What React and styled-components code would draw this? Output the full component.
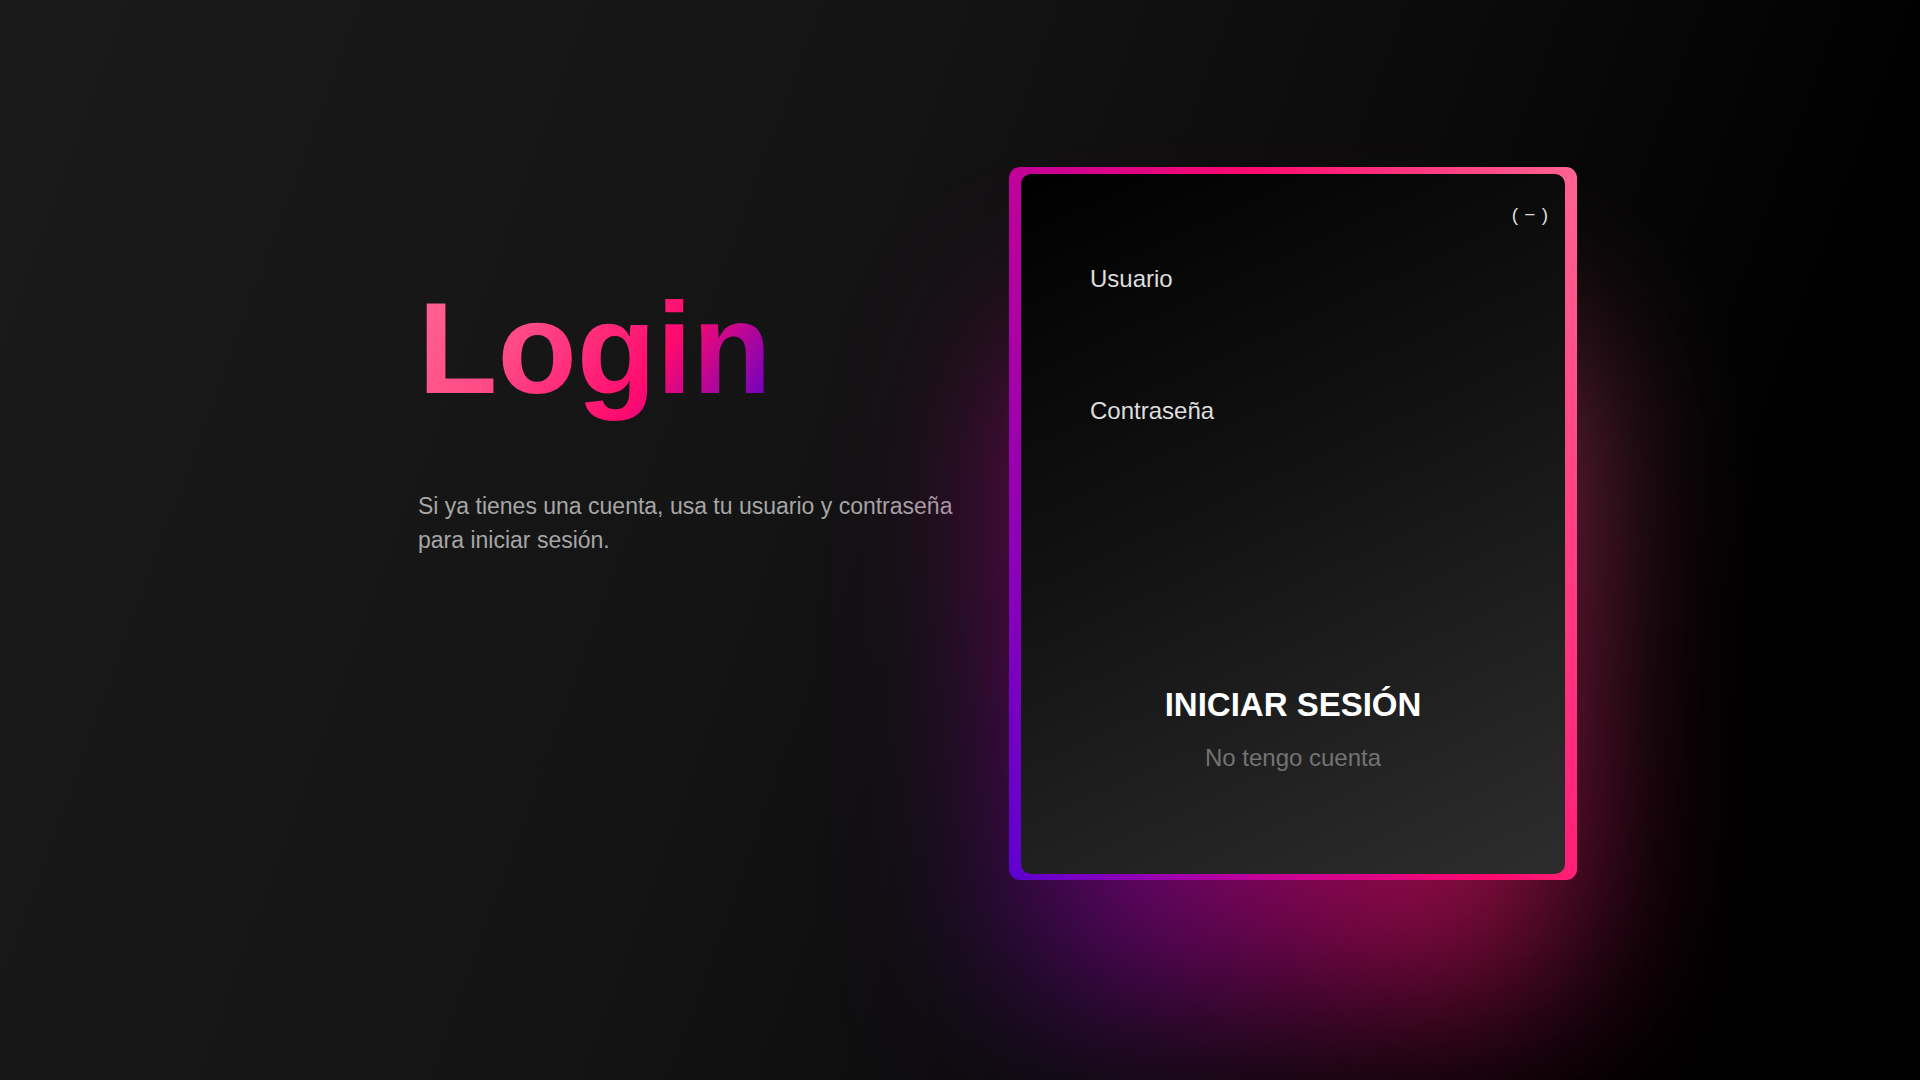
import styled, { createGlobalStyle } from 'styled-components';

const GlobalStyle = createGlobalStyle`
  html,
  body {
    margin: 0;
    padding: 0;
    min-height: 100%;
    background: linear-gradient(110deg, #1a1a1a 0%, #141414 40%, #0a0a0a 65%, #000 85%);
    font-family: 'Liberation Sans', Arial, sans-serif;
  }

  * {
    box-sizing: border-box;
  }
`;

const borderGradient = 'linear-gradient(71deg, #5c00d2 0%, #c0009a 30%, #ff0a6e 60%, #ff6492 100%)';

const Page = styled.div`
  display: flex;
  align-items: flex-start;
  min-height: 100vh;
  padding: 167px 0 0 418px;
`;

const Intro = styled.div`
  width: 591px;
  flex-shrink: 0;
`;

const Title = styled.h1`
  display: inline-block;
  margin: 103px 0 0;
  font-size: 130px;
  font-weight: 700;
  line-height: 1.2;
  background: linear-gradient(125deg, #ff6694 0%, #ff4a86 32%, #ff0a6e 66%, #5200d0 100%);
  -webkit-background-clip: text;
  background-clip: text;
  color: transparent;
`;

const Lead = styled.p`
  width: 560px;
  margin: 63px 0 0;
  font-size: 23px;
  line-height: 34px;
  color: #a6a6a6;
`;

const CardArea = styled.div`
  position: relative;
  width: 568px;
  height: 713px;
  flex-shrink: 0;
`;

const Glow = styled.div`
  position: absolute;
  left: 10px;
  right: 10px;
  top: 170px;
  bottom: -120px;
  border-radius: 60px;
  background: ${borderGradient};
  filter: blur(90px);
  opacity: 0.6;
`;

const Frame = styled.div`
  position: relative;
  height: 100%;
  padding: 7px 12px 6px;
  border-radius: 11px;
  background: ${borderGradient};
`;

const Card = styled.form`
  display: flex;
  flex-direction: column;
  height: 100%;
  padding: 30px 0 102px;
  border-radius: 10px;
  background: linear-gradient(155deg, #000 0%, #121212 45%, #2d2d2d 100%);
`;

const TopRow = styled.div`
  display: flex;
  justify-content: flex-end;
  padding-right: 17px;
`;

const Toggle = styled.button`
  padding: 0;
  border: none;
  background: none;
  font-family: inherit;
  font-size: 19px;
  line-height: 22px;
  word-spacing: 1px;
  color: #dcdcdc;
  cursor: pointer;
`;

const Fields = styled.div`
  display: flex;
  flex-direction: column;
  gap: 48px;
  margin-top: 39px;
  padding: 0 69px;
`;

const Field = styled.label`
  display: flex;
  flex-direction: column;
  gap: 8px;
  font-size: 24px;
  line-height: 28px;
  color: #dedede;
`;

const Input = styled.input`
  height: 48px;
  padding: 0;
  border: none;
  outline: none;
  background: transparent;
  font-family: inherit;
  font-size: 20px;
  color: #fff;
`;

const Actions = styled.div`
  display: flex;
  flex-direction: column;
  align-items: center;
  gap: 20px;
  margin-top: auto;
`;

const SubmitButton = styled.button`
  padding: 0;
  border: none;
  background: none;
  font-family: inherit;
  font-size: 33px;
  font-weight: 700;
  line-height: 38px;
  color: #fff;
  cursor: pointer;
`;

const RegisterLink = styled.a`
  font-size: 24px;
  line-height: 28px;
  color: #737373;
  text-decoration: none;
  cursor: pointer;
`;

const App = () => {
  return (
    <>
      <GlobalStyle />
      <Page>
        <Intro>
          <Title>Login</Title>
          <Lead>Si ya tienes una cuenta, usa tu usuario y contraseña para iniciar sesión.</Lead>
        </Intro>

        <CardArea>
          <Glow />
          <Frame>
            <Card onSubmit={(e) => e.preventDefault()}>
              <TopRow>
                <Toggle type="button">( − )</Toggle>
              </TopRow>
              <Fields>
                <Field>
                  Usuario
                  <Input name="usuario" autoComplete="username" />
                </Field>
                <Field>
                  Contraseña
                  <Input name="password" type="password" autoComplete="current-password" />
                </Field>
              </Fields>
              <Actions>
                <SubmitButton type="submit">INICIAR SESIÓN</SubmitButton>
                <RegisterLink>No tengo cuenta</RegisterLink>
              </Actions>
            </Card>
          </Frame>
        </CardArea>
      </Page>
    </>
  );
};

export default App;
